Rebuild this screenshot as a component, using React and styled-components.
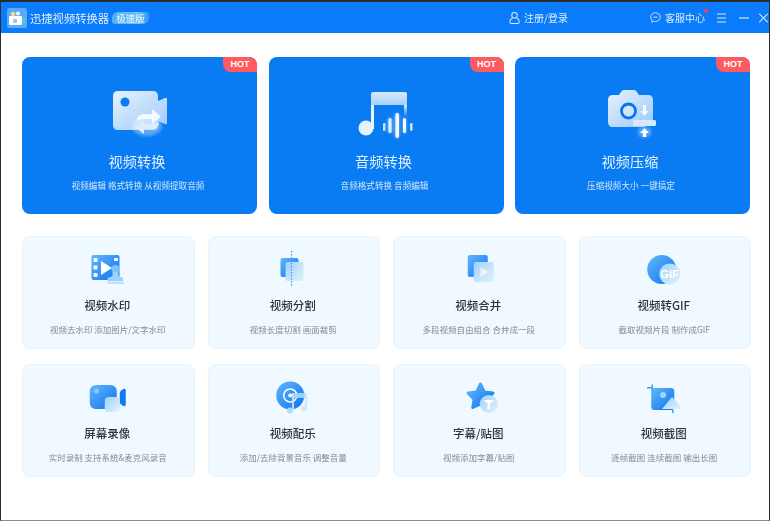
import React from 'react';
import styled, { createGlobalStyle } from 'styled-components';

const Global = createGlobalStyle`
  html, body { margin: 0; padding: 0; background: #fff; }
  body { font-family: "Noto Sans CJK SC", "Noto Sans", sans-serif; }
`;

const Defs = () => (
  <svg width="0" height="0" style={{ position: 'absolute' }}>
    <defs>
      <linearGradient id="glass" x1="0" y1="0" x2="1" y2="1">
        <stop offset="0" stopColor="#e6f2fe" />
        <stop offset="1" stopColor="#9ccafa" />
      </linearGradient>
      <linearGradient id="barTop" x1="0" y1="0" x2="0" y2="1">
        <stop offset="0" stopColor="#d5e9fe" />
        <stop offset="1" stopColor="#a9d1fb" />
      </linearGradient>
      <linearGradient id="fadeDown" x1="0" y1="0" x2="0" y2="1">
        <stop offset="0" stopColor="#e7f3ff" />
        <stop offset="1" stopColor="#e7f3ff" stopOpacity="0" />
      </linearGradient>
      <linearGradient id="blue" x1="0" y1="0" x2="1" y2="1">
        <stop offset="0" stopColor="#62b6fb" />
        <stop offset="1" stopColor="#0a74f0" />
      </linearGradient>
      <linearGradient id="pale" x1="0" y1="0" x2="1" y2="1">
        <stop offset="0" stopColor="#9dd2fb" />
        <stop offset="1" stopColor="#e2f3fe" />
      </linearGradient>
      <filter id="soft" x="-30%" y="-30%" width="160%" height="160%"><feGaussianBlur stdDeviation="1.6" /></filter>
    </defs>
  </svg>
);

const VideoConvertIcon = () => (
  <svg width="60" height="50" viewBox="0 0 60 50">
    <path d="M8 1h35q5 0 5 5v5l7-3q2-1 2 1v24q0 2-2 1l-7-3v4q0 5-5 5H8q-5 0-5-5V6q0-5 5-5z" fill="url(#glass)" />
    <circle cx="15" cy="12" r="4.500" fill="#0a7cf5" />
    <ellipse cx="37" cy="36" rx="15" ry="10" fill="#fff" opacity=".35" filter="url(#soft)" />
    <path d="M27 31q0-7 7-7h8v-5l9 7.500-9 7.500v-5h-8q-4 0-7 2z" fill="#f4faff" />
    <path d="M49 32q0 7-7 7h-8v5l-9-7 9-7v4h8q4 0 7-2z" fill="#dcedff" />
  </svg>
);

const AudioConvertIcon = () => (
  <svg width="60" height="50" viewBox="0 0 60 50">
    <path d="M17 2h32q2 0 2 2v11H15V4q0-2 2-2z" fill="url(#barTop)" />
    <path d="M15 15h3v24h-3z" fill="#e7f3ff" />
    <path d="M48 15h3v12h-3z" fill="url(#fadeDown)" />
    <circle cx="10" cy="38" r="7.500" fill="#e4f1ff" />
    <g fill="#fff" filter="url(#soft)" opacity=".55">
      <rect x="32" y="28" width="4" height="15" rx="2" />
      <rect x="39" y="23" width="4" height="25" rx="2" />
      <rect x="47" y="28" width="3" height="15" rx="1.500" />
    </g>
    <g fill="#f4faff">
      <rect x="27" y="33" width="2.500" height="8" rx="1.200" opacity=".8" />
      <rect x="32.500" y="28" width="3" height="15" rx="1.500" opacity=".85" />
      <rect x="39.500" y="23" width="3.500" height="25" rx="1.700" />
      <rect x="47" y="28" width="3" height="15" rx="1.500" />
      <rect x="54" y="33" width="2.500" height="8" rx="1.200" opacity=".8" />
    </g>
  </svg>
);

const CompressIcon = () => (
  <svg width="60" height="50" viewBox="0 0 60 50">
    <path d="M10 5h6l2-3q1-2 3-2h10q2 0 3 2l2 3h9q5 0 5 5v20h-8v7H10q-5 0-5-5V10q0-5 5-5z" fill="url(#glass)" />
    <circle cx="25.500" cy="21" r="7" fill="#cfe5fc" stroke="#0a74ea" strokeWidth="2.800" />
    <path d="M40 15h3v6h2.500l-4 5-4-5H40z" fill="#fff" opacity=".9" />
    <rect x="30" y="30" width="23" height="6" rx="1.500" fill="#d5e9ff" />
    <ellipse cx="41.500" cy="42" rx="7" ry="6" fill="#fff" opacity=".3" filter="url(#soft)" />
    <path d="M41.500 38l4.500 5h-2.800v4h-3.400v-4H37z" fill="#fff" />
  </svg>
);

const WatermarkIcon = () => (
  <svg width="46" height="46" viewBox="0 0 46 46">
    <rect x="6.500" y="9" width="28" height="25" rx="2" fill="url(#blue)" />
    <g fill="#fff">
      <rect x="8.500" y="12" width="4" height="4" rx="1" />
      <rect x="8.500" y="19.500" width="4" height="4" rx="1" />
      <rect x="8.500" y="27" width="4" height="4" rx="1" />
      <rect x="29" y="12" width="4" height="3" rx="1" />
    </g>
    <path d="M16 15l11 7-11 7z" fill="#fff" />
    <circle cx="30.500" cy="23" r="4" fill="#7ec1f9" />
    <path d="M27.500 26h6v4l4.500 2v3H22.500v-3l5-2z" fill="#9dd0fa" />
    <rect x="22" y="35.500" width="17" height="2.500" rx="1" fill="#bfe2fc" />
  </svg>
);

const SplitIcon = () => (
  <svg width="46" height="46" viewBox="0 0 46 46">
    <rect x="9.500" y="12" width="18" height="19" rx="2" fill="url(#blue)" />
    <rect x="14.500" y="16" width="18" height="19" rx="2" fill="url(#pale)" />
    <path d="M20.500 5v36" stroke="#3d9bf3" strokeWidth="1.200" strokeDasharray="1.500 1.500" fill="none" />
  </svg>
);

const MergeIcon = () => (
  <svg width="46" height="46" viewBox="0 0 46 46">
    <rect x="11.750" y="9" width="20" height="22" rx="2" fill="url(#blue)" />
    <rect x="17.750" y="16" width="20" height="20" rx="2" fill="url(#pale)" />
    <path d="M24.500 21l8 5-8 5z" fill="#fff" opacity=".7" />
  </svg>
);

const GifIcon = () => (
  <svg width="46" height="46" viewBox="0 0 46 46">
    <circle cx="19.750" cy="23.500" r="14.500" fill="url(#blue)" />
    <circle cx="27.750" cy="28" r="10.500" fill="url(#pale)" />
    <GifLabel x="27.500" y="32">GIF</GifLabel>
  </svg>
);

const RecordIcon = () => (
  <svg width="46" height="46" viewBox="0 0 46 46">
    <rect x="4.750" y="11" width="27" height="24" rx="6" fill="url(#blue)" />
    <path d="M34.750 19q0-1.500 1.500-2.500l2-1.500q2.500-1 2.500 1.500v14q0 2.500-2.500 1.500l-2-1.500q-1.500-1-1.500-2.500z" fill="#0f7bf2" />
    <circle cx="11.500" cy="17" r="2.500" fill="#8cc7fb" />
    <rect x="19.750" y="23" width="15" height="15" rx="4" fill="url(#pale)" />
  </svg>
);

const MusicIcon = () => (
  <svg width="46" height="46" viewBox="0 0 46 46">
    <circle cx="19.250" cy="21.500" r="14" fill="url(#blue)" />
    <circle cx="19.250" cy="21.500" r="6.500" fill="none" stroke="#fff" strokeWidth="1.500" />
    <circle cx="19.250" cy="21.500" r="2" fill="#fff" />
    <path d="M21 19h15v5H21z" fill="#a8d6fb" opacity=".9" />
    <rect x="21" y="19" width="2" height="17" fill="#b7defc" />
    <rect x="34" y="19" width="2" height="15" fill="#cce8fd" />
    <circle cx="19" cy="36.500" r="3" fill="#aedafc" />
    <circle cx="33" cy="34.500" r="3" fill="#cfe9fd" />
  </svg>
);

const StickerIcon = () => (
  <svg width="46" height="46" viewBox="0 0 46 46">
    <path d="M24.500 10L28.300 18 37 19 30.900 25.200 32.200 33.500 24.500 29.800 16.800 33.500 18.100 25.200 12 19 20.700 18z" fill="url(#blue)" stroke="url(#blue)" strokeWidth="3" strokeLinejoin="round" />
    <circle cx="32.750" cy="30" r="9" fill="url(#pale)" />
    <path d="M28.500 26h8.500v2.200h-3v7h-2.500v-7h-3z" fill="#fff" />
  </svg>
);

const ScreenshotIcon = () => (
  <svg width="46" height="46" viewBox="0 0 46 46">
    <rect x="9.250" y="14" width="23" height="22" rx="3" fill="url(#blue)" />
    <rect x="5" y="13" width="5" height="1.500" fill="#3d9bf3" />
    <rect x="9.500" y="10.500" width="1.500" height="6" fill="#3d9bf3" />
    <rect x="30" y="36" width="1.500" height="3" fill="#3d9bf3" />
    <circle cx="21" cy="21" r="3" fill="#a5d5fb" />
    <path d="M20 35l10-12 10 11q-.5 1-1 1z" fill="url(#pale)" />
  </svg>
);

const bigCards = [
  { title: '视频转换', sub: '视频编辑 格式转换 从视频提取音频', Icon: VideoConvertIcon },
  { title: '音频转换', sub: '音频格式转换 音频编辑', Icon: AudioConvertIcon },
  { title: '视频压缩', sub: '压缩视频大小 一键搞定', Icon: CompressIcon }
];

const smallCards = [
  { title: '视频水印', sub: '视频去水印 添加图片/文字水印', Icon: WatermarkIcon },
  { title: '视频分割', sub: '视频长度切割 画面裁剪', Icon: SplitIcon },
  { title: '视频合并', sub: '多段视频自由组合 合并成一段', Icon: MergeIcon },
  { title: '视频转GIF', sub: '截取视频片段 制作成GIF', Icon: GifIcon },
  { title: '屏幕录像', sub: '实时录制 支持系统&麦克风录音', Icon: RecordIcon },
  { title: '视频配乐', sub: '添加/去除背景音乐 调整音量', Icon: MusicIcon },
  { title: '字幕/贴图', sub: '视频添加字幕/贴图', Icon: StickerIcon },
  { title: '视频截图', sub: '逐帧截图 连续截图 输出长图', Icon: ScreenshotIcon }
];

export default function App() {
  return (
    <Shell>
      <Global />
      <Defs />
      <Header>
        <Brand>
          <Logo>
            <svg width="20" height="20" viewBox="0 0 20 20">
              <rect x="0" y="0" width="20" height="20" rx="2" fill="#5aa9fb" />
              <rect x="2" y="8" width="13" height="9" rx="1" fill="#fff" />
              <circle cx="6" cy="6" r="2.300" fill="#ffd86b" />
              <circle cx="11" cy="5.500" r="2" fill="#fff" />
              <rect x="15.500" y="9.500" width="3" height="6" fill="#3fd3c8" />
              <rect x="6" y="11" width="4" height="4" fill="#9cc8f5" />
            </svg>
          </Logo>
          <AppName>迅捷视频转换器</AppName>
          <Edition>极速版</Edition>
        </Brand>
        <Actions>
          <HeaderLink $width={141}>
            <svg width="11" height="14" viewBox="0 0 12 14" fill="none" stroke="#d7eaff" strokeWidth="1.100">
              <circle cx="6" cy="4" r="3" />
              <path d="M3.800 7Q.8 8.500.8 11q0 2 2 2h6.400q2 0 2-2 0-2.500-3-4" />
            </svg>
            注册/登录
          </HeaderLink>
          <HeaderLink $width={56}>
            <svg width="11" height="11" viewBox="0 0 12 12" fill="none" stroke="#d7eaff" strokeWidth="1">
              <path d="M6 .8a5.200 4.800 0 0 1 0 9.600q-1 0-2-.3L2 11.200l.2-2.200Q.8 7.700.8 5.600A5.200 4.800 0 0 1 6 .8z" />
              <path d="M3.800 5.600h4.400" />
            </svg>
            客服中心
            <RedDot />
          </HeaderLink>
          <WindowButtons>
            <svg width="9" height="10" viewBox="0 0 9 10" stroke="#d7eaff" strokeWidth="1"><path d="M0 1h9M0 5h9M0 9h9" /></svg>
            <svg width="10" height="10" viewBox="0 0 10 10" stroke="#d7eaff" strokeWidth="1.200"><path d="M0 5h10" /></svg>
            <svg width="9" height="10" viewBox="0 0 9 10" stroke="#d7eaff" strokeWidth="1.100"><path d="M.3.800l8.400 8.400M8.700.800L.3 9.200" /></svg>
          </WindowButtons>
        </Actions>
      </Header>
      <Main>
        <BigGrid>
          {bigCards.map(({ title, sub, Icon }) => (
            <BigCard key={title}>
              <HotBadge>HOT</HotBadge>
              <BigIconBox><Icon /></BigIconBox>
              <BigTitle>{title}</BigTitle>
              <BigSub>{sub}</BigSub>
            </BigCard>
          ))}
        </BigGrid>
        <SmallGrid>
          {smallCards.map(({ title, sub, Icon }) => (
            <SmallCard key={title}>
              <SmallIconBox><Icon /></SmallIconBox>
              <SmallTitle>{title}</SmallTitle>
              <SmallSub>{sub}</SmallSub>
            </SmallCard>
          ))}
        </SmallGrid>
      </Main>
    </Shell>
  );
}

const Shell = styled.div`
  box-sizing: border-box;
  width: 770px;
  height: 521px;
  overflow: hidden;
  background: #fff;
  border: 1px solid #2b2b2b;
  border-bottom-color: #8a8a8a;
  border-top-width: 2px;
`;

const Header = styled.header`
  height: 31px;
  background: #0a7cfb;
  display: flex;
  align-items: center;
  justify-content: space-between;
  color: #dcecff;
`;

const Brand = styled.div`
  display: flex;
  align-items: center;
  padding-left: 6px;
`;

const Logo = styled.div`
  width: 20px;
  height: 20px;
  margin-right: 3px;
  svg { display: block; }
`;

const AppName = styled.div`
  font-size: 11.300px;
  line-height: 16px;
  white-space: nowrap;
  filter: blur(0.35px);
`;

const Edition = styled.div`
  margin-left: 3px;
  width: 37px;
  height: 12px;
  line-height: 12px;
  font-size: 9.500px;
  text-align: center;
  color: #e8f4ff;
  background: linear-gradient(90deg, #4fb0f5, #6cc4f0 70%, #2f97f8);
  border-radius: 6px 3px 6px 3px;
  filter: blur(0.35px);
`;

const Actions = styled.div`
  display: flex;
  align-items: center;
`;

const HeaderLink = styled.div`
  position: relative;
  width: ${(p) => p.$width}px;
  display: flex;
  align-items: center;
  gap: 4px;
  font-size: 10px;
  white-space: nowrap;
  filter: blur(0.3px);
`;

const RedDot = styled.span`
  position: absolute;
  left: 54px;
  top: -1px;
  width: 4px;
  height: 4px;
  border-radius: 50%;
  background: #ff3d3d;
`;

const WindowButtons = styled.div`
  display: flex;
  align-items: center;
  padding: 0 1px 0 11px;
  svg { display: block; }
  svg:nth-child(2) { margin: 0 10px 0 13px; }
`;

const Main = styled.main`
  padding: 24px 18px 0 21px;
`;

const BigGrid = styled.div`
  display: grid;
  grid-template-columns: repeat(3, 235px);
  column-gap: 11.500px;
`;

const BigCard = styled.section`
  position: relative;
  height: 157px;
  border-radius: 8px;
  background: #0a7cf3;
  overflow: hidden;
  display: flex;
  flex-direction: column;
  align-items: center;
  color: #e3f1ff;
`;

const HotBadge = styled.span`
  position: absolute;
  top: 0;
  right: 0;
  width: 34px;
  height: 15px;
  line-height: 15px;
  text-align: center;
  font-family: "Liberation Sans", sans-serif;
  font-size: 9px;
  font-weight: 700;
  color: #fff;
  background: #ff5a5f;
  border-bottom-left-radius: 8px;
`;

const BigIconBox = styled.div`
  height: 50px;
  margin-top: 33px;
  svg { display: block; }
`;

const BigTitle = styled.h2`
  margin: 11px 0 0;
  padding-right: 5px;
  font-size: 14.200px;
  line-height: 20px;
  font-weight: 400;
  filter: blur(0.4px);
`;

const BigSub = styled.p`
  margin: 7px 0 0;
  padding-right: 3px;
  font-size: 8.600px;
  line-height: 14px;
  color: #cfe6fd;
  filter: blur(0.4px);
`;

const SmallGrid = styled.div`
  display: grid;
  grid-template-columns: repeat(4, 172.500px);
  column-gap: 13px;
  row-gap: 15px;
  margin-top: 22px;
`;

const SmallCard = styled.section`
  box-sizing: border-box;
  height: 113px;
  border-radius: 8px;
  background: #f0f9ff;
  border: 1px solid #e6f4fc;
  display: flex;
  flex-direction: column;
  align-items: center;
`;

const SmallIconBox = styled.div`
  height: 46px;
  margin-top: 9px;
  svg { display: block; }
`;

const SmallTitle = styled.h3`
  margin: 4px 0 0;
  padding-right: 2px;
  font-size: 11.500px;
  line-height: 18px;
  font-weight: 500;
  color: #333;
  filter: blur(0.4px);
`;

const SmallSub = styled.p`
  margin: 8px 0 0;
  padding-right: 1px;
  font-size: 8.500px;
  line-height: 14px;
  color: #8a8a8a;
  filter: blur(0.4px);
`;

const GifLabel = styled.text`
  font-family: "Liberation Sans", sans-serif;
  font-size: 11px;
  font-weight: 700;
  fill: #fff;
  text-anchor: middle;
`;
